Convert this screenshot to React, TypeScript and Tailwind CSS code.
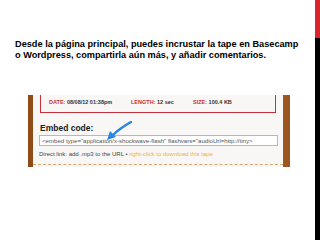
import React from 'react';

const wood = 'bg-[linear-gradient(90deg,#8f4a18,#c07230,#9c5420)]';

function Shot() {
  return (
    <div className={`flex h-[72px] w-[262px] ${wood} ml-[28px]`}>
      <div className="w-[5px]" />
      <div className="flex-1 bg-[#f8f7f5] flex flex-col font-['Liberation_Sans',Arial,sans-serif]">
        <div className="mx-[7px] h-[18px] border-x-[1.5px] border-b-[1.5px] border-[#c5303a] flex items-center pl-[8px] pb-[2px] text-[5.5px] font-bold">
          <span className="w-[82px]"><span className="text-[#c5303a]">DATE: </span><span className="text-[#333]">08/08/12 01:38pm</span></span>
          <span className="w-[62px]"><span className="text-[#c5303a]">LENGTH: </span><span className="text-[#333]">12 sec</span></span>
          <span><span className="text-[#c5303a]">SIZE: </span><span className="text-[#333]">100.4 KB</span></span>
        </div>
        <div className="relative mt-[11px] ml-[7px] text-[8.5px] leading-[9px] font-bold text-[#222]">
          Embed code:
          <svg className="absolute left-[64px] top-[-3px] z-10" width="30" height="20" viewBox="0 0 30 20">
            <path d="M27 1 C20 5 14 9 9 14" stroke="#2a86e0" strokeWidth="2.4" fill="none" strokeLinecap="round" />
            <path d="M3 19 L6 10 L12 16 Z" fill="#2a86e0" />
          </svg>
        </div>
        <div className="mt-[2px] ml-[6px] mr-[5px] h-[11px] border border-[#b8b8b8] bg-white flex items-center px-[2px] text-[6.1px] text-[#555] whitespace-nowrap overflow-hidden">
          &lt;embed type="application/x-shockwave-flash" flashvars="audioUrl=http://tiny&gt;
        </div>
        <div className="mt-[4px] ml-[6px] text-[6px] text-[#444] whitespace-nowrap">
          Direct link: add .mp3 to the URL • <span className="text-[#f0b040]">right-click to download this tape</span>
        </div>
        <div className="mt-auto mb-[2px] border-b border-dashed border-[#d9a870]" />
      </div>
      <div className="w-[7px]" />
    </div>
  );
}

export default function App() {
  return (
    <div className="w-[320px] h-[240px] bg-white flex overflow-hidden">
      <div className="flex-1 flex flex-col">
        <div className="mt-[39px] ml-[15px] text-[9.2px] leading-[11px] font-bold text-black font-['Liberation_Sans',Arial,sans-serif] whitespace-nowrap">
          <div>Desde la página principal, puedes incrustar la tape en Basecamp</div>
          <div>o Wordpress, compartirla aún más, y añadir comentarios.</div>
        </div>
        <div className="mt-[34px]">
          <Shot />
        </div>
      </div>
      <div className="w-[5px] flex flex-col">
        <div className="h-[38px] bg-[#d8252e]" />
        <div className="flex-1 bg-black" />
      </div>
    </div>
  );
}
